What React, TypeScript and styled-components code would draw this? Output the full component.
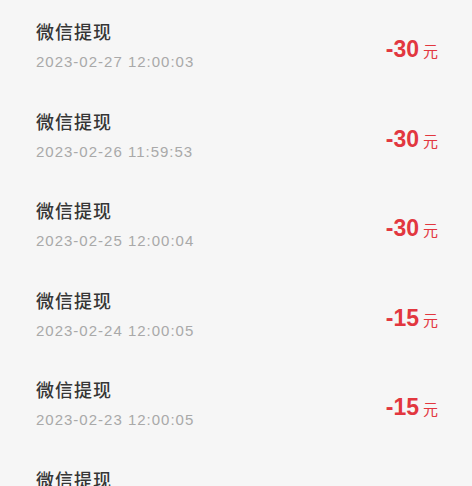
import styled, { createGlobalStyle } from 'styled-components';

const GlobalStyle = createGlobalStyle`
  html, body {
    margin: 0;
    padding: 0;
    background: #f6f6f6;
  }
  body {
    font-family: "Liberation Sans", "Noto Sans CJK SC", sans-serif;
  }
`;

type Record = { date: string; amount: number };

const records: Record[] = [
  { date: '2023-02-27 12:00:03', amount: 30 },
  { date: '2023-02-26 11:59:53', amount: 30 },
  { date: '2023-02-25 12:00:04', amount: 30 },
  { date: '2023-02-24 12:00:05', amount: 15 },
  { date: '2023-02-23 12:00:05', amount: 15 },
  { date: '2023-02-22 12:00:02', amount: 15 },
];

export default function App() {
  return (
    <>
      <GlobalStyle />
      <List>
        {records.map((r) => (
          <Row key={r.date}>
            <Info>
              <Title>微信提现</Title>
              <DateText>{r.date}</DateText>
            </Info>
            <Amount>
              -{r.amount}
              <Unit>元</Unit>
            </Amount>
          </Row>
        ))}
      </List>
    </>
  );
}

const List = styled.div`
  display: flex;
  flex-direction: column;
  height: 486px;
  overflow: hidden;
`;

const Row = styled.div`
  display: flex;
  align-items: flex-start;
  justify-content: space-between;
  height: 89.5px;
  flex-shrink: 0;
  box-sizing: border-box;
  padding: 21px 34px 0 36px;
`;

const Info = styled.div`
  display: flex;
  flex-direction: column;
  gap: 7px;
`;

const Title = styled.div`
  font-size: 18px;
  line-height: 24px;
  letter-spacing: 1px;
  font-weight: 500;
  color: #363636;
`;

const DateText = styled.div`
  font-size: 15px;
  line-height: 20px;
  letter-spacing: 1px;
  color: #a9a9a9;
`;

const Amount = styled.div`
  display: flex;
  align-items: baseline;
  margin-top: 15px;
  color: #e2373f;
  font-size: 23px;
  font-weight: 700;
`;

const Unit = styled.span`
  font-size: 15px;
  font-weight: 400;
  margin-left: 4px;
`;
